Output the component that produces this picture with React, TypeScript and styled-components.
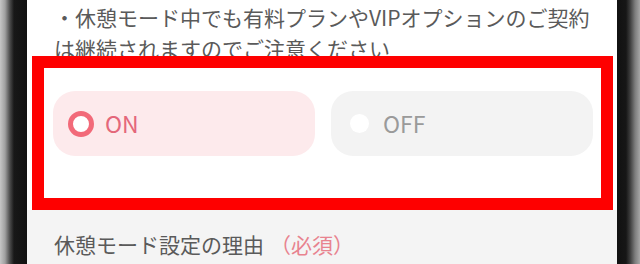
import React from "react";
import styled, { createGlobalStyle } from "styled-components";

const GlobalStyle = createGlobalStyle`
  html, body {
    margin: 0;
    padding: 0;
    background: #111;
  }
  body {
    font-family: "Noto Sans CJK JP", "Noto Sans", sans-serif;
  }
`;

const Device = styled.div`
  display: flex;
  width: 640px;
  height: 264px;
  overflow: hidden;
`;

const Bezel = styled.div<{ $side: "left" | "right" }>`
  flex: 0 0 ${(p) => (p.$side === "left" ? "27px" : "23px")};
  background: ${(p) =>
    p.$side === "left"
      ? "linear-gradient(to right, #c6c6c6 0px, #a0a0a0 5px, #4a4a4a 10px, #181818 14px, #111 27px)"
      : "linear-gradient(to right, #111 0px, #161616 9px, #3c3c3c 13px, #7c7c7c 18px, #a6a6a6 23px)"};
`;

const Screen = styled.div`
  flex: 1;
  display: flex;
  flex-direction: column;
  background: #fff;
  min-width: 0;
`;

const Notice = styled.p`
  margin: 0;
  height: 56px;
  overflow: hidden;
  padding: 2px 0 0 27px;
  box-sizing: border-box;
  font-size: 21px;
  line-height: 31px;
  color: #5a5a5a;
  white-space: nowrap;
`;

const Highlight = styled.div`
  margin: 0 4px 0 5px;
  height: 154px;
  box-sizing: border-box;
  border: 12px solid #fe0000;
  background: #fff;
  padding: 23px 8px 0 9px;
  display: flex;
  gap: 16px;
  align-items: flex-start;
`;

const Choice = styled.div<{ $active?: boolean }>`
  flex: 1;
  height: 65px;
  border-radius: 22px;
  background: ${(p) => (p.$active ? "#fdeaec" : "#f3f3f3")};
  display: flex;
  align-items: center;
  padding-left: 15px;
  gap: 11px;
  box-sizing: border-box;
`;

const Radio = styled.span<{ $active?: boolean }>`
  flex: 0 0 26px;
  height: 26px;
  display: flex;
  align-items: center;
  justify-content: center;

  &::before {
    content: "";
    display: block;
    box-sizing: border-box;
    width: ${(p) => (p.$active ? "26px" : "19px")};
    height: ${(p) => (p.$active ? "26px" : "19px")};
    border-radius: 50%;
    background: #fff;
    border: ${(p) => (p.$active ? "5px solid #f26a79" : "none")};
  }
`;

const ChoiceLabel = styled.span<{ $active?: boolean }>`
  font-size: 23px;
  line-height: 1;
  color: ${(p) => (p.$active ? "#e4677a" : "#9a9a9a")};
`;

const Reason = styled.div`
  flex: 1;
  background: #f4f4f4;
  padding: 19px 0 0 27px;
  font-size: 21px;
  line-height: 31px;
  color: #5a5a5a;
  white-space: nowrap;
`;

const Required = styled.span`
  margin-left: 6px;
  color: #e8838f;
`;

const App: React.FC = () => {
  return (
    <>
      <GlobalStyle />
      <Device>
        <Bezel $side="left" />
        <Screen>
          <Notice>
            ・休憩モード中でも有料プランやVIPオプションのご契約
            <br />
            は継続されますのでご注意ください
          </Notice>
          <Highlight>
            <Choice $active>
              <Radio $active />
              <ChoiceLabel $active>ON</ChoiceLabel>
            </Choice>
            <Choice>
              <Radio />
              <ChoiceLabel>OFF</ChoiceLabel>
            </Choice>
          </Highlight>
          <Reason>
            休憩モード設定の理由<Required>（必須）</Required>
          </Reason>
        </Screen>
        <Bezel $side="right" />
      </Device>
    </>
  );
};

export default App;
